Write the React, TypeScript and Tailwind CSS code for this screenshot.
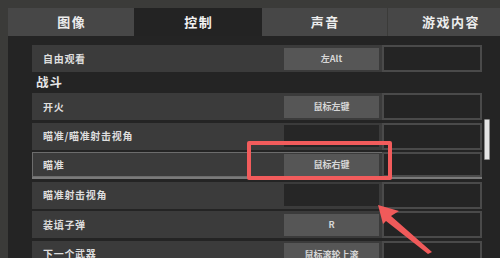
import React from "react";

type Row = { label: string; key1?: string; active?: boolean };

const rowsTop: Row[] = [{ label: "自由观看", key1: "左Alt" }];
const rowsFight: Row[] = [
  { label: "开火", key1: "鼠标左键" },
  { label: "瞄准/瞄准射击视角" },
  { label: "瞄准", key1: "鼠标右键", active: true },
  { label: "瞄准射击视角" },
  { label: "装填子弹", key1: "R" },
  { label: "下一个武器", key1: "鼠标滚轮上滚" },
];

const font = { fontFamily: '"Noto Sans CJK SC", "Noto Sans", sans-serif' };

function KeyRow({ row }: { row: Row }) {
  return (
    <div
      className={
        "flex items-center h-[27px] w-[450px] shrink-0 bg-[#3b3b3b] " +
        (row.active ? "ring-1 ring-inset ring-[#6c6c6c] border-b-2 border-[#7a7a7a]" : "")
      }
    >
      <div className="w-[252px] pl-[11px] text-[10px] font-bold tracking-[0.7px] text-[#dedede] leading-none">
        {row.label}
      </div>
      <div
        className={
          "w-[95px] h-[22px] flex items-center justify-center text-[9px] font-bold text-[#d6d6d6] leading-none " +
          (row.key1 ? "bg-[#565656]" : "bg-[#262626]")
        }
      >
        {row.key1 ?? ""}
      </div>
      <div className="ml-[3px] w-[100px] h-full border-[2px] border-[#4a4a4a] bg-[#242424]" />
    </div>
  );
}

export default function App() {
  return (
    <div
      className="relative w-[500px] h-[258px] overflow-hidden bg-[#3b3b39] pt-[8px] pl-[8px] flex flex-col"
      style={font}
    >
      {/* tabs */}
      <div className="flex h-[28px] shrink-0">
        <div className="w-[126px] shrink-0 bg-[#474747] flex items-center justify-center text-[13px] font-bold text-[#ececec]">
          <span className="tracking-[1.5px] pl-[1.5px]">图像</span>
        </div>
        <div className="w-[128px] shrink-0 bg-[#232323] flex items-center justify-center text-[13px] font-bold text-[#f2f2f2]">
          <span className="tracking-[1.5px] pl-[1.5px]">控制</span>
        </div>
        <div className="w-[125px] shrink-0 bg-[#474747] flex items-center justify-center text-[13px] font-bold text-[#ececec]">
          <span className="tracking-[1.5px] pl-[1.5px]">声音</span>
        </div>
        <div className="ml-[1px] flex-1 bg-[#474747] flex items-center pl-[34px] text-[13px] font-bold text-[#ececec]">
          <span className="tracking-[1.5px] whitespace-nowrap">游戏内容</span>
        </div>
      </div>

      {/* content */}
      <div className="flex-1 bg-[#242424] flex">
        <div className="pl-[24px] pt-[9px] flex flex-col">
          {rowsTop.map((r) => (
            <KeyRow key={r.label} row={r} />
          ))}
          <div className="h-[21px] flex items-center pl-[4px] text-[12.5px] font-bold tracking-[1px] text-[#e6e6e6]">
            战斗
          </div>
          <div className="flex flex-col gap-[2.6px]">
            {rowsFight.map((r) => (
              <KeyRow key={r.label} row={r} />
            ))}
          </div>
        </div>
        <div className="w-[18px] pt-[83px] pl-[2px]">
          <div className="w-[6px] h-[41px] bg-[#e4e4e4] border border-[#8a8a8a] rounded-[1px]" />
        </div>
      </div>

      {/* annotation: red box */}
      <div className="absolute left-[247px] top-[141px] w-[145px] h-[39px] border-[4px] border-[#f25c5c] rounded-[2px]" />

      {/* annotation: arrow */}
      <svg className="absolute left-0 top-0" width="500" height="258" viewBox="0 0 500 258">
        <polygon
          points="378,205 399,211 391,216 432,252 428,254 386,221 383,224"
          fill="#f05a5a"
        />
      </svg>
    </div>
  );
}
